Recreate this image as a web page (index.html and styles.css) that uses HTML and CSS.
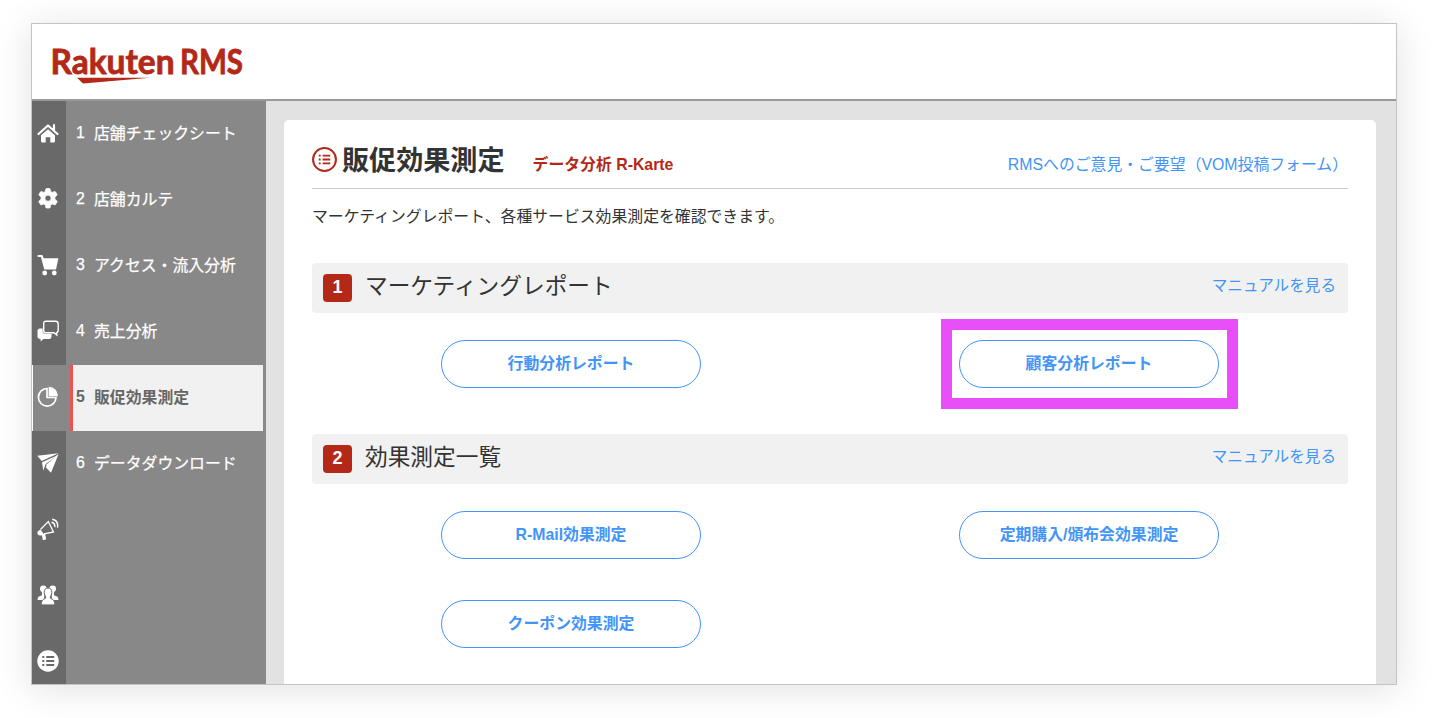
FILE: index.html
```html
<!DOCTYPE html>
<html lang="ja">

<head>
  <meta charset="UTF-8" />
  <meta name="viewport" content="width=device-width, initial-scale=1.0" />
  <title>販促効果測定 | Rakuten RMS</title>
  <link rel="stylesheet" href="styles.css">
</head>

<body>
  <div class="window">
    <header class="header">
      <svg class="logo" width="210" height="56" viewBox="-6 -8 210 56">
        <text x="-1.500" y="32" textLength="124" lengthAdjust="spacingAndGlyphs">Rakuten</text>
        <text x="128" y="32" textLength="63" lengthAdjust="spacingAndGlyphs">RMS</text>
        <path d="M25 35.800H98L31 41.500z" />
      </svg>
    </header>

    <div class="body">
      <nav class="icons">
        <a class="icon">
          <svg viewBox="0 0 22 22"><path d="M1.500 12 11 3.500l9.500 8.500M17 3v5" fill="none" stroke="#fff" stroke-width="2.200" stroke-linecap="round" stroke-linejoin="round" /><path d="M11 7.300 18 13.300V19q0 1.500-1.500 1.500h-3.200v-5.200H8.700v5.200H5.500Q4 20.500 4 19v-5.700z" /></svg>
        </a>
        <a class="icon">
          <svg viewBox="0 0 22 22"><path fill-rule="evenodd" stroke="#fff" stroke-width=".8" stroke-linejoin="round" d="M8.800 1Q9 .5 9.600.5h2.800q.6 0 .7.500l.5 2.500 1.600.9 2.400-.8q.6-.2.9.3l1.500 2.500q.3.500-.1.900l-2 1.800v2.100l2 1.800q.4.400.1.900l-1.500 2.600q-.3.500-.9.300l-2.400-.8-1.600.9-.5 2.600q-.1.500-.7.500H9.600q-.6 0-.7-.5l-.5-2.600-1.600-.9-2.400.8q-.6.200-.9-.3L2 13.900q-.3-.5.1-.9l2-1.800V9.100l-2-1.800q-.4-.4-.1-.9l1.500-2.500q.3-.5.9-.3l2.400.8 1.600-.9zM11 7.100a3.100 3.100 0 1 0 0 6.200 3.100 3.100 0 0 0 0-6.200z" /></svg>
        </a>
        <a class="icon">
          <svg viewBox="0 0 22 22"><path d="M1.500 2h3.300l3.300 12.500h10.200" fill="none" stroke="#fff" stroke-width="2.200" stroke-linecap="round" stroke-linejoin="round" /><path d="M5.200 4.200h15.600q.6 0 .5.600l-2 9.200H7.800z" /><circle cx="7.700" cy="19" r="2.400" /><circle cx="17.300" cy="19" r="2.400" /></svg>
        </a>
        <a class="icon">
          <svg viewBox="0 0 22 22"><path d="M9 1.200h9.500q2.700 0 2.700 2.700v5.800q0 2.700-1.600 2.900l.2 2.300-3-2.200H9q-2.300 0-2.300-2.300V3.700q0-2.500 2.300-2.500z" fill="none" stroke="#fff" stroke-width="1.400" /><path d="M3 8.500h2.700v2.600q0 2.700 2.800 2.700h6v2.900q0 2.300-2.500 2.300H6.300L3.800 21.500 3.500 19Q.5 18.700.5 16.500v-5.500Q.5 8.500 3 8.500z" /></svg>
        </a>
        <a class="icon icon-active">
          <svg viewBox="0 0 22 22"><path d="M10 2.500a8.800 8.800 0 1 0 9 9h-9z" fill="none" stroke="#fff" stroke-width="1.700" /><path d="M11.600.700q8.800.600 9.400 9.600h-9.400z" /></svg>
        </a>
        <a class="icon">
          <svg viewBox="0 0 22 22"><path d="M21.500 1.300.3 3.800l4.400 5.300zM20.600 3.300 5 10.300l1.300 8.200L8.700 12z" /><path d="M21.700 1.700 9.800 12.300l-.9 3.200L14 20.700z" /></svg>
        </a>
        <a class="icon">
          <svg viewBox="0 0 22 22"><path d="M3.500 11.500 11.300 3.500 16.500 14 7 15.800" fill="none" stroke="#fff" stroke-width="1.300" /><path d="M3.700 11.800 6.700 16l1.500-.3 1 5.600q-2 1-3.500.4L5 17.200Q1 18.300.4 15.500-.1 12.900 3.700 11.800z" /><path d="M14.500 4.200q4 .8 3.200 5M15.200 1.200q6.500 1.200 5.300 8.500" fill="none" stroke="#fff" stroke-width="1.400" /></svg>
        </a>
        <a class="icon">
          <svg viewBox="0 0 22 22"><g><circle cx="6.300" cy="4.800" r="3.300" /><circle cx="15.700" cy="4.800" r="3.300" /><path d="M4.800 7h3l-.5 4L7 16H.5q0-3 1.800-3.800l2.800-1zM17.200 7h-3l.5 4 .3 5h6.500q0-3-1.800-3.800l-2.800-1z" /></g><path class="front" d="M11 4q3.800 0 3.800 4.500 0 2.700-1.700 4.500.1 1.300 1.200 1.700 3.500 1 3.500 6.200H4.200q0-5.200 3.500-6.200 1.100-.4 1.200-1.700-1.700-1.800-1.700-4.500Q7.200 4 11 4z" /></svg>
        </a>
        <a class="icon">
          <svg viewBox="0 0 22 22"><circle cx="11" cy="11" r="10.700" /><path d="M5.300 7h2M5.300 11h2M5.300 15h2M9.200 7h8M9.200 11h8M9.200 15h8" stroke="#696969" stroke-width="2" /></svg>
        </a>
      </nav>

      <ul class="menu">
        <li><span>1</span>店舗チェックシート</li>
        <li><span>2</span>店舗カルテ</li>
        <li><span>3</span>アクセス・流入分析</li>
        <li><span>4</span>売上分析</li>
        <li class="active"><span>5</span>販促効果測定</li>
        <li><span>6</span>データダウンロード</li>
      </ul>

      <main class="main">
        <div class="panel">
          <div class="title-row">
            <svg class="title-icon" viewBox="0 0 26 26"><circle cx="13" cy="13" r="11.900" fill="none" stroke="#b32817" stroke-width="2.100" /><path d="M7 9h2M7 13h2M7 17h2M11 9h8M11 13h8M11 17h8" stroke="#b32817" stroke-width="1.900" /></svg>
            <h1>販促効果測定</h1>
            <span class="subtitle">データ分析 R-Karte</span>
            <a class="link">RMSへのご意見・ご要望（VOM投稿フォーム）</a>
          </div>
          <p class="lead">マーケティングレポート、各種サービス効果測定を確認できます。</p>

          <section>
            <div class="section-head">
              <span class="number">1</span>
              <h2>マーケティングレポート</h2>
              <a class="link">マニュアルを見る</a>
            </div>
            <div class="buttons">
              <a class="button">行動分析レポート</a>
              <a class="button marked">顧客分析レポート</a>
            </div>
          </section>

          <section>
            <div class="section-head">
              <span class="number">2</span>
              <h2>効果測定一覧</h2>
              <a class="link">マニュアルを見る</a>
            </div>
            <div class="buttons">
              <a class="button">R-Mail効果測定</a>
              <a class="button">定期購入/頒布会効果測定</a>
              <a class="button">クーポン効果測定</a>
            </div>
          </section>
        </div>
      </main>
    </div>
  </div>
</body>

</html>
```
FILE: styles.css
```css
* {
  box-sizing: border-box;
}

body {
  margin: 0;
  padding: 23px 35px 33px 31px;
  height: 718px;
  overflow: hidden;
  background: #fff;
  color: #333;
  font-family: "Liberation Sans", "Noto Sans CJK JP", sans-serif;
  font-size: 15.85px;
}

h1,
h2,
p,
ul {
  margin: 0;
  padding: 0;
}

.window {
  display: flex;
  flex-direction: column;
  height: 662px;
  border: 1px solid #c4c4c4;
  box-shadow: 0 4px 36px rgba(0, 0, 0, .12);
  overflow: hidden;
}

.header {
  flex: none;
  height: 77px;
  padding: 10px 0 0 14px;
  background: #fff;
  border-bottom: 2px solid #999;
}

.logo {
  display: block;
  fill: #b32817;
  font-family: Lato, sans-serif;
  font-size: 34px;
  font-weight: 700;
}

.logo text {
  stroke: #b32817;
  stroke-width: .8;
}

.body {
  display: flex;
  flex: 1;
  min-height: 0;
}

/* sidebar */
.icons {
  flex: none;
  width: 34px;
  background: #696969;
}

.icon {
  display: flex;
  align-items: center;
  height: 66px;
  padding: 0 0 2px 5px;
}

.icon svg {
  width: 22px;
  height: 22px;
  fill: #fff;
}

.icon-active {
  padding-left: 4px;
  background: #888;
  border-left: 1px solid #fff;
}

.front {
  stroke: #696969;
  stroke-width: 1;
}

.menu {
  flex: none;
  width: 200px;
  background: #888;
  color: #fff;
  list-style: none;
  -webkit-text-stroke: .25px;
}

.menu li {
  display: flex;
  align-items: center;
  height: 66px;
  padding: 0 0 4px 10px;
  white-space: nowrap;
}

.menu span {
  width: 18px;
  padding-top: 1px;
}

.menu .active {
  margin: 0 3px 0 4px;
  padding-left: 3px;
  background: #f1f1f1;
  border-left: 3px solid #eb5353;
  color: #666;
  font-weight: 700;
  -webkit-text-stroke: 0;
}

/* content */
.main {
  flex: 1;
  padding: 19px 20px 0 18px;
  background: #e2e2e2;
}

.panel {
  height: 600px;
  padding: 0 28px;
  background: #fff;
  border-radius: 5px;
}

.title-row {
  display: flex;
  align-items: center;
  height: 69px;
  padding-top: 11px;
  border-bottom: 1px solid #ccc;
}

.title-icon {
  width: 25px;
  height: 25px;
  margin-right: 5px;
}

h1 {
  margin-top: 3px;
  font-size: 27.100px;
  line-height: 40px;
}

.subtitle {
  margin: 8px 0 0 28px;
  color: #b32817;
  font-weight: 700;
}

.link {
  margin-left: auto;
  color: #4294f7;
}

.title-row .link {
  margin-top: 8px;
}

.lead {
  height: 74px;
  padding-top: 16px;
  line-height: 24px;
}

.section-head {
  display: flex;
  align-items: center;
  height: 50px;
  padding: 0 12px 0 11px;
  background: #f1f1f1;
  border-radius: 4px;
}

.section-head .link {
  margin-bottom: 8px;
  font-size: 15.6px;
}

.number {
  width: 29px;
  height: 28px;
  margin-right: 13px;
  background: #b32817;
  border-radius: 4px;
  color: #fff;
  font-size: 18px;
  font-weight: 700;
  line-height: 27px;
  text-align: center;
}

h2 {
  margin-bottom: 4px;
  font-size: 22.7px;
  font-weight: 400;
  line-height: 34px;
}

.buttons {
  display: grid;
  grid-template-columns: 1fr 1fr;
  justify-items: center;
  row-gap: 41px;
  padding: 27px 0 46px;
}

.button {
  display: flex;
  align-items: center;
  justify-content: center;
  width: 260px;
  height: 48px;
  padding-bottom: 3px;
  border: 1px solid #4294f7;
  border-radius: 24px;
  color: #4294f7;
  font-weight: 700;
}

.marked {
  position: relative;
}

.marked::after {
  content: "";
  position: absolute;
  inset: -22px -20px -22px -19px;
  border: 11.500px solid #e84ff8;
}
```
